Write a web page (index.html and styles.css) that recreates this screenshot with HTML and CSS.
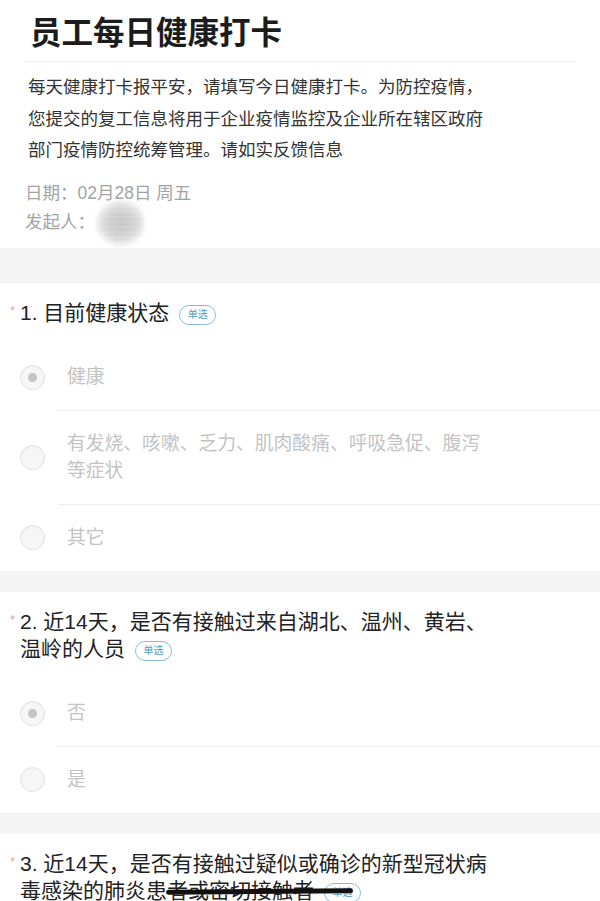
FILE: index.html
```html
<!DOCTYPE html>
<html lang="zh-CN">
<head>
<meta charset="utf-8">
<title>员工每日健康打卡</title>
<link rel="stylesheet" href="styles.css">
</head>
<body>
<div class="page">
  <header class="head">
    <h1 class="title">员工每日健康打卡</h1>
    <p class="desc">每天健康打卡报平安，请填写今日健康打卡。为防控疫情，您提交的复工信息将用于企业疫情监控及企业所在辖区政府部门疫情防控统筹管理。请如实反馈信息</p>
    <div class="meta">
      <div class="meta-line">日期：02月28日 周五</div>
      <div class="meta-line">发起人：<span class="blur"></span></div>
    </div>
  </header>

  <div class="band"></div>

  <section class="q">
    <div class="q-title"><span class="star">*</span>1. 目前健康状态<span class="badge">单选</span></div>
    <div class="opts">
      <div class="opt"><span class="radio on"></span><div class="opt-body">健康</div></div>
      <div class="opt"><span class="radio"></span><div class="opt-body">有发烧、咳嗽、乏力、肌肉酸痛、呼吸急促、腹泻等症状</div></div>
      <div class="opt"><span class="radio"></span><div class="opt-body last">其它</div></div>
    </div>
  </section>

  <div class="band thin"></div>

  <section class="q">
    <div class="q-title"><span class="star">*</span>2. 近14天，是否有接触过来自湖北、温州、黄岩、温岭的人员<span class="badge">单选</span></div>
    <div class="opts">
      <div class="opt"><span class="radio on"></span><div class="opt-body">否</div></div>
      <div class="opt"><span class="radio"></span><div class="opt-body last">是</div></div>
    </div>
  </section>

  <div class="band thin"></div>

  <section class="q">
    <div class="q-title"><span class="star">*</span>3. 近14天，是否有接触过疑似或确诊的新型冠状病毒感染的肺炎患<span class="scribble">者或密切接触者<span class="badge">单选</span></span></div>
  </section>
</div>
</body>
</html>
```

FILE: styles.css
```css
* { box-sizing: border-box; }
html, body { margin: 0; padding: 0; background: #fff; }
body {
  font-family: "Liberation Sans", "Noto Sans CJK SC", "Noto Sans", sans-serif;
  color: #222;
  width: 600px;
  overflow: hidden;
}
.page { width: 600px; }

.head { padding: 13px 25px 11px 25px; }
.title {
  margin: 0;
  padding-left: 5px;
  font-size: 31.5px;
  line-height: 40px;
  font-weight: 700;
  color: #1c1c1c;
  padding-bottom: 8px;
  border-bottom: 1px solid #eeeeee;
}
.desc {
  margin: 10px 0 0 0;
  padding-left: 3px;
  max-width: 468px;
  font-size: 17.5px;
  line-height: 31.5px;
  color: #333;
}
.meta { margin-top: 12px; }
.meta-line {
  font-size: 17.5px;
  line-height: 29px;
  color: #a3a3a3;
}
.blur {
  display: inline-block;
  vertical-align: middle;
  width: 54px;
  height: 50px;
  margin: -17px 0 -17px -4px;
  border-radius: 40%;
  background:
    repeating-linear-gradient(0deg, rgba(255,255,255,0.45) 0 2px, rgba(255,255,255,0) 2px 5px),
    radial-gradient(ellipse 50% 50% at 55% 50%, #bcbcbc 0%, #c8c8c8 45%, #d8d8d8 70%, rgba(255,255,255,0) 100%);
  filter: blur(1.5px);
}

.band { height: 35px; background: #f4f4f4; }
.band.thin { height: 21px; }

.q { padding-top: 16px; }
.q-title {
  padding: 0 100px 0 20px;
  font-size: 21px;
  line-height: 27px;
  color: #222;
}
.star {
  display: inline-block;
  width: 10px;
  margin-left: -10px;
  font-size: 13px;
  line-height: 24px;
  vertical-align: top;
  color: #e6a69c;
  text-align: left;
}
.badge {
  display: inline-block;
  vertical-align: 2px;
  margin-left: 10px;
  width: 37px;
  height: 20px;
  border: 1.5px solid #86bdd8;
  border-radius: 10px;
  font-size: 10px;
  line-height: 17px;
  text-align: center;
  color: #4f9bc6;
}
.scribble { position: relative; }
.scribble::after {
  content: "";
  position: absolute;
  left: -1px;
  right: 8px;
  top: 50%;
  height: 4.5px;
  margin-top: -1px;
  background: #111;
  border-radius: 3px;
  transform: rotate(-0.4deg);
}

.opts { margin-top: 18px; }
.opt { display: flex; align-items: center; }
.radio {
  flex: none;
  width: 25px;
  height: 25px;
  margin-left: 20px;
  border-radius: 50%;
  border: 1px solid #e2e2e2;
  background: #f6f6f6;
  box-shadow: inset 0 1px 2px rgba(0,0,0,0.03);
  display: flex;
  align-items: center;
  justify-content: center;
}
.radio.on::after {
  content: "";
  width: 9px;
  height: 9px;
  border-radius: 50%;
  background: #c4c4c4;
}
.opt-body {
  flex: 1;
  margin-left: 13px;
  padding: 19px 105px 20px 9px;
  border-bottom: 1px solid #eeeeee;
  font-size: 18.8px;
  line-height: 27px;
  color: #c3c3c3;
}
.opt-body.last { border-bottom: none; }
```
